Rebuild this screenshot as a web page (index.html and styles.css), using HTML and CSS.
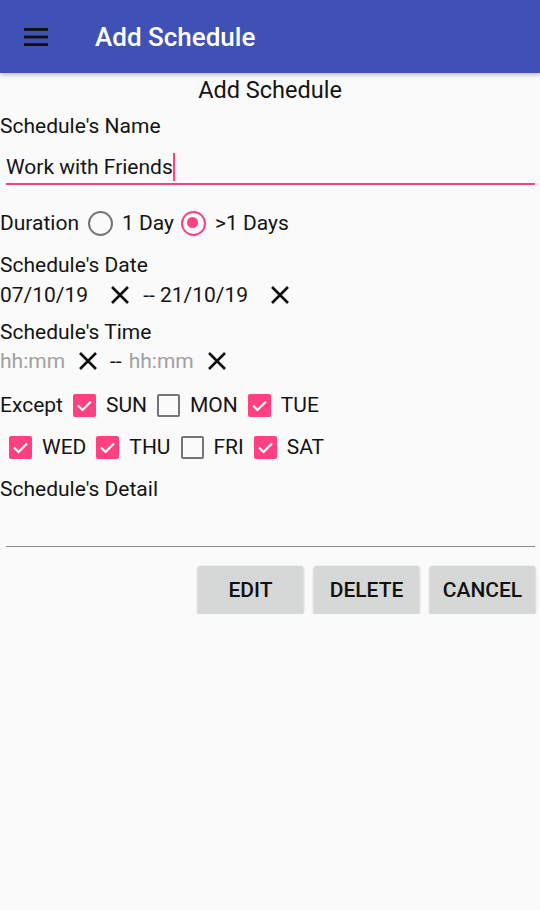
FILE: index.html
```html
<!DOCTYPE html>
<html lang="en">
<head>
<meta charset="UTF-8">
<meta name="viewport" content="width=device-width, initial-scale=1.0">
<title>Add Schedule</title>
<link rel="stylesheet" href="styles.css">
</head>
<body>

<header class="appbar">
  <svg class="menu-icon" width="24" height="18" viewBox="0 0 24 18">
    <rect x="0" y="0" width="24" height="2.8" fill="#111"/>
    <rect x="0" y="7.6" width="24" height="2.8" fill="#111"/>
    <rect x="0" y="15.2" width="24" height="2.8" fill="#111"/>
  </svg>
  <span class="appbar-title">Add Schedule</span>
</header>

<main class="content">
  <h1 class="page-title">Add Schedule</h1>

  <div class="label name-label">Schedule's Name</div>
  <div class="text-field active">
    <span class="value">Work with Friends</span><span class="cursor"></span>
  </div>

  <div class="row duration-row">
    <span class="label">Duration</span>
    <span class="radio"></span>
    <span class="opt">1 Day</span>
    <span class="radio checked"></span>
    <span class="opt">&gt;1 Days</span>
  </div>

  <div class="label date-label">Schedule's Date</div>
  <div class="row date-row">
    <span class="val">07/10/19</span>
    <svg class="clear clear-date" width="20" height="20" viewBox="0 0 20 20"><path d="M2 2L18 18M18 2L2 18" stroke="#111" stroke-width="2.6"/></svg>
    <span class="val">-- 21/10/19</span>
    <svg class="clear clear-date" width="20" height="20" viewBox="0 0 20 20"><path d="M2 2L18 18M18 2L2 18" stroke="#111" stroke-width="2.6"/></svg>
  </div>

  <div class="label time-label">Schedule's Time</div>
  <div class="row time-row">
    <span class="hint">hh:mm</span>
    <svg class="clear clear-time" width="20" height="20" viewBox="0 0 20 20"><path d="M2 2L18 18M18 2L2 18" stroke="#111" stroke-width="2.6"/></svg>
    <span class="val dash">--</span>
    <span class="hint">hh:mm</span>
    <svg class="clear clear-time" width="20" height="20" viewBox="0 0 20 20"><path d="M2 2L18 18M18 2L2 18" stroke="#111" stroke-width="2.6"/></svg>
  </div>

  <div class="row days-row">
    <span class="label">Except</span>
    <span class="check on"><svg width="23" height="23" viewBox="0 0 23 23"><path d="M5 11.5L9.5 16L18 7.5" fill="none" stroke="#fff" stroke-width="2.2"/></svg></span>
    <span class="day">SUN</span>
    <span class="check"></span>
    <span class="day">MON</span>
    <span class="check on"><svg width="23" height="23" viewBox="0 0 23 23"><path d="M5 11.5L9.5 16L18 7.5" fill="none" stroke="#fff" stroke-width="2.2"/></svg></span>
    <span class="day">TUE</span>
  </div>
  <div class="row days-row second">
    <span class="check on"><svg width="23" height="23" viewBox="0 0 23 23"><path d="M5 11.5L9.5 16L18 7.5" fill="none" stroke="#fff" stroke-width="2.2"/></svg></span>
    <span class="day">WED</span>
    <span class="check on"><svg width="23" height="23" viewBox="0 0 23 23"><path d="M5 11.5L9.5 16L18 7.5" fill="none" stroke="#fff" stroke-width="2.2"/></svg></span>
    <span class="day">THU</span>
    <span class="check"></span>
    <span class="day">FRI</span>
    <span class="check on"><svg width="23" height="23" viewBox="0 0 23 23"><path d="M5 11.5L9.5 16L18 7.5" fill="none" stroke="#fff" stroke-width="2.2"/></svg></span>
    <span class="day">SAT</span>
  </div>

  <div class="label detail-label">Schedule's Detail</div>
  <div class="text-field detail"></div>

  <div class="buttons">
    <button class="btn">EDIT</button>
    <button class="btn">DELETE</button>
    <button class="btn">CANCEL</button>
  </div>
</main>

</body>
</html>
```

FILE: styles.css
```css
/* Add Schedule screen */
body {
  font-family: Roboto, "Noto Sans", sans-serif;
  margin: 0;
  padding: 0;
  background-color: #fafafa;
  color: #141414;
}

.appbar {
  height: 73px;
  background-color: #3f51b5;
  display: flex;
  align-items: center;
  padding-left: 24px;
  box-shadow: 0 2px 4px rgba(0, 0, 0, 0.25);
  position: relative;
}

.menu-icon {
  margin-top: 1px;
}

.appbar-title {
  color: #fff;
  font-size: 26px;
  font-weight: 500;
  margin-left: 47px;
}

.content {
  display: flex;
  flex-direction: column;
}

.page-title {
  margin: 0;
  height: 35px;
  line-height: 35px;
  text-align: center;
  font-size: 23.5px;
  font-weight: 400;
}

.label {
  font-size: 21px;
}

.name-label {
  height: 36px;
  line-height: 36px;
}

.text-field {
  margin: 0 5px 0 6px;
  padding-top: 8px;
  padding-bottom: 1px;
  height: 30px;
  line-height: 30px;
  font-size: 21px;
  border-bottom: 1px solid #8a8a8a;
  display: flex;
  align-items: center;
}

.text-field.active {
  border-bottom: 2px solid #ff4081;
}

.cursor {
  display: inline-block;
  width: 2px;
  height: 28px;
  background-color: #ff4081;
  margin-left: 0;
}

.row {
  display: flex;
  align-items: center;
  font-size: 21px;
  height: 30px;
}

.duration-row {
  margin-top: 18px;
  height: 40px;
}

.radio {
  width: 25px;
  height: 25px;
  box-sizing: border-box;
  border: 2.6px solid #757575;
  border-radius: 50%;
  margin: 0 9px 0 9px;
  position: relative;
}

.radio.checked {
  border-color: #ff4081;
  margin-left: 7px;
}

.radio.checked::after {
  content: "";
  position: absolute;
  left: 4.4px;
  top: 4.4px;
  width: 11px;
  height: 11px;
  border-radius: 50%;
  background-color: #ff4081;
}

.date-label {
  margin-top: 9px;
  height: 26px;
  line-height: 26px;
}

.date-row {
  margin-top: 2px;
}

.clear-date {
  margin: 0 13px 0 22px;
}

.time-label {
  margin-top: 8px;
  height: 28px;
  line-height: 28px;
}

.hint {
  color: #a0a0a0;
}

.clear-time {
  margin: 0 12px 0 13px;
}

.dash {
  margin-right: 7px;
}

.days-row {
  margin-top: 14px;
  gap: 10px;
}

.days-row.second {
  margin-top: 12px;
  padding-left: 9px;
}

.check {
  width: 23px;
  height: 23px;
  box-sizing: border-box;
  border: 2.6px solid #757575;
  border-radius: 2px;
  display: flex;
}

.check.on {
  border: none;
  background-color: #ff4081;
}

.day {
  margin-right: 0;
}

.detail-label {
  margin-top: 14px;
  height: 26px;
  line-height: 26px;
}

.text-field.detail {
  padding: 0;
  height: 44px;
}

.buttons {
  display: flex;
  justify-content: flex-end;
  gap: 11px;
  margin: 19px 5px 0 0;
}

.btn {
  width: 105px;
  height: 48px;
  border: none;
  border-radius: 2px;
  background-color: #d6d7d7;
  color: #111;
  font-family: Roboto, sans-serif;
  font-size: 21px;
  font-weight: 500;
  box-shadow: 0 1px 3px rgba(0, 0, 0, 0.3);
  cursor: pointer;
}
```
